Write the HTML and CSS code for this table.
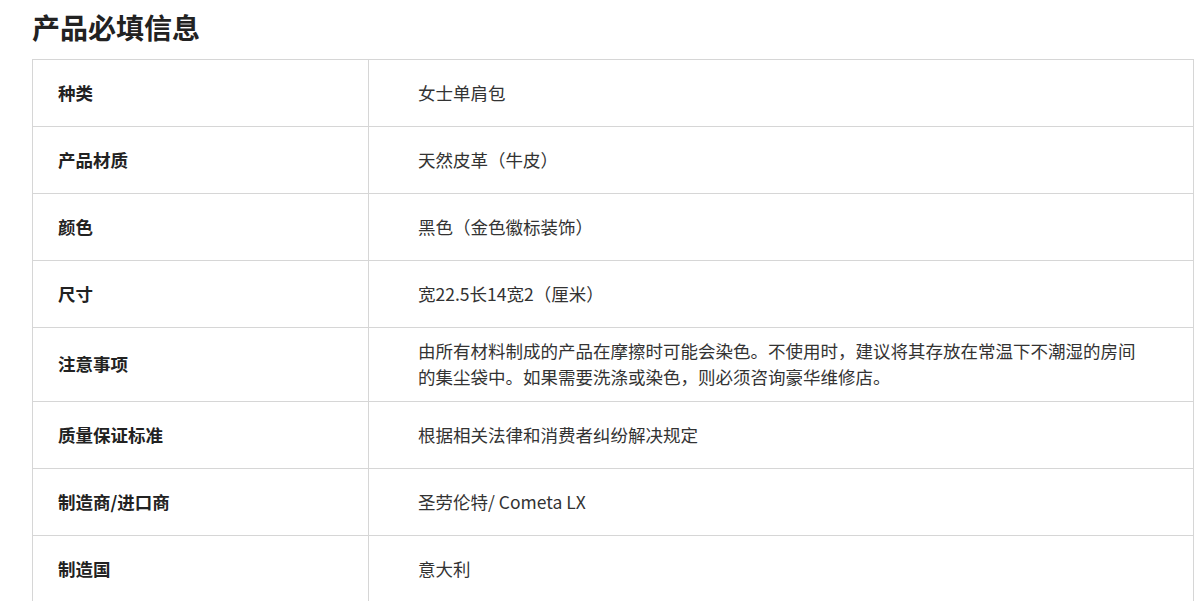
FILE: index.html
```html
<!DOCTYPE html>
<html lang="zh-CN">
<head>
<meta charset="utf-8">
<title>产品必填信息</title>
<link rel="stylesheet" href="styles.css">
</head>
<body>
<div class="page">
  <h2 class="title">产品必填信息</h2>
  <div class="spec">
    <div class="row"><div class="label">种类</div><div class="value">女士单肩包</div></div>
    <div class="row"><div class="label">产品材质</div><div class="value">天然皮革（牛皮）</div></div>
    <div class="row"><div class="label">颜色</div><div class="value">黑色（金色徽标装饰）</div></div>
    <div class="row"><div class="label">尺寸</div><div class="value">宽22.5长14宽2（厘米）</div></div>
    <div class="row"><div class="label">注意事项</div><div class="value">由所有材料制成的产品在摩擦时可能会染色。不使用时，建议将其存放在常温下不潮湿的房间的集尘袋中。如果需要洗涤或染色，则必须咨询豪华维修店。</div></div>
    <div class="row"><div class="label">质量保证标准</div><div class="value">根据相关法律和消费者纠纷解决规定</div></div>
    <div class="row"><div class="label">制造商/进口商</div><div class="value">圣劳伦特/ Cometa LX</div></div>
    <div class="row"><div class="label">制造国</div><div class="value">意大利</div></div>
  </div>
</div>
</body>
</html>
```

FILE: styles.css
```css
html, body {
  margin: 0;
  padding: 0;
  background: #ffffff;
}

body {
  font-family: "Noto Sans CJK SC", "Noto Sans", sans-serif;
  color: #333333;
}

.page {
  padding: 7px 1px 0 32px;
}

.title {
  margin: 0 0 12px 0;
  font-size: 28px;
  line-height: 40px;
  font-weight: 700;
  color: #222222;
}

.spec {
  border-top: 1px solid #d6d6d6;
  border-left: 1px solid #d6d6d6;
}

.row {
  display: grid;
  grid-template-columns: 336px 1fr;
}

.label,
.value {
  display: flex;
  align-items: center;
  min-height: 45px;
  padding: 10px 0 11px 0;
  border-right: 1px solid #d6d6d6;
  border-bottom: 1px solid #d6d6d6;
  font-size: 17.5px;
  line-height: 26px;
}

.label {
  padding-left: 25px;
  font-weight: 700;
  color: #222222;
}

.value {
  padding-left: 49px;
  padding-right: 50px;
  color: #333333;
}
```
